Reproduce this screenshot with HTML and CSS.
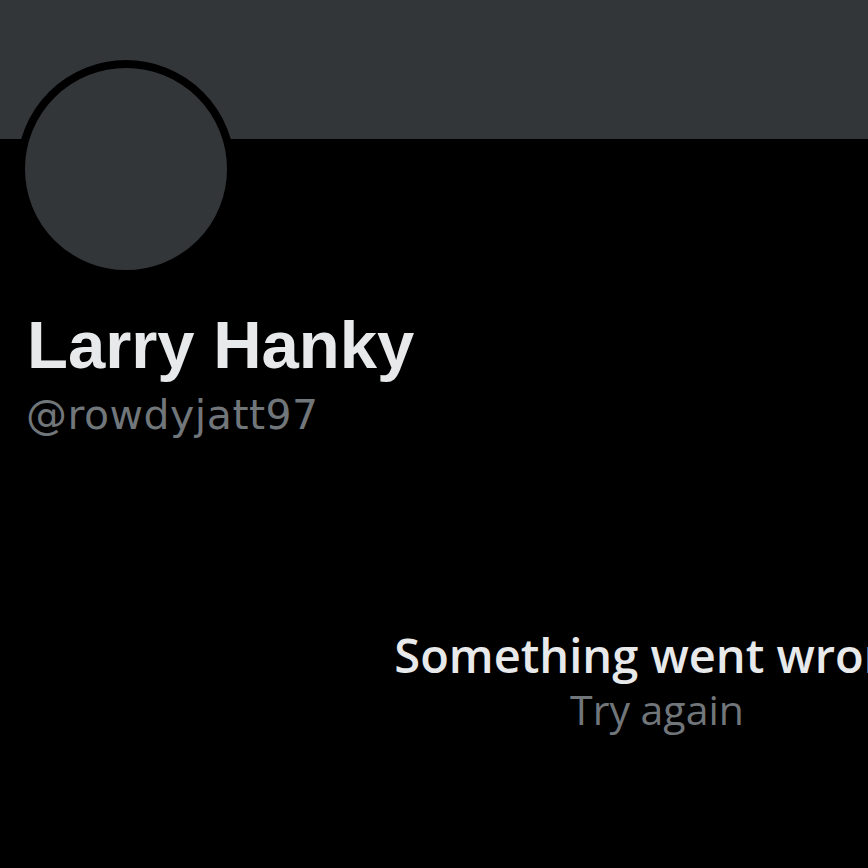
FILE: index.html
```html
<!DOCTYPE html>
<html lang="en">
<head>
    <meta charset="UTF-8">
    <meta name="viewport" content="width=device-width, initial-scale=1.0">
    <title>Larry Hanky</title>
    <link rel="stylesheet" href="styles.css">
</head>
<body>
    <div class="banner"></div>

    <div class="profile">
        <div class="avatar"></div>
        <h1 class="name">Larry Hanky</h1>
        <p class="handle">@rowdyjatt97</p>
    </div>

    <div class="error-box">
        <p class="error-title">Something went wrong</p>
        <p class="error-retry">Try again</p>
    </div>
</body>
</html>
```

FILE: styles.css
```css
/* page */
body {
    margin: 0;
    background: #000;
    width: 868px;
    height: 868px;
    overflow: hidden;
    font-family: 'Liberation Sans', Arial, sans-serif;
}

/* grey header strip */
.banner {
    height: 139px;
    background: #333639;
}

/* name + avatar */
.profile {
    padding-left: 17px;
}

.avatar {
    width: 202px;
    height: 202px;
    border-radius: 50%;
    background: #333639;
    border: 8px solid #000;
    margin-top: -79px;
}

.name {
    margin: 27px 0 0 10px;
    font-size: 67px;
    line-height: 80px;
    font-weight: bold;
    color: #e7e9ea;
}

.handle {
    margin: 0 0 0 9px;
    font-family: 'DejaVu Sans', sans-serif;
    font-size: 41px;
    letter-spacing: 0.5px;
    line-height: 60px;
    color: #71767b;
}

/* error message */
.error-box {
    width: 528px;
    margin: 184px 0 0 393px;
    text-align: center;
    white-space: nowrap;
    font-family: 'Open Sans', sans-serif;
}

.error-title {
    margin: 0;
    font-size: 47px;
    line-height: 52px;
    font-weight: 600;
    color: #e7e9ea;
}

.error-retry {
    margin: 0;
    font-size: 41px;
    line-height: 56px;
    color: #71767b;
}
```
